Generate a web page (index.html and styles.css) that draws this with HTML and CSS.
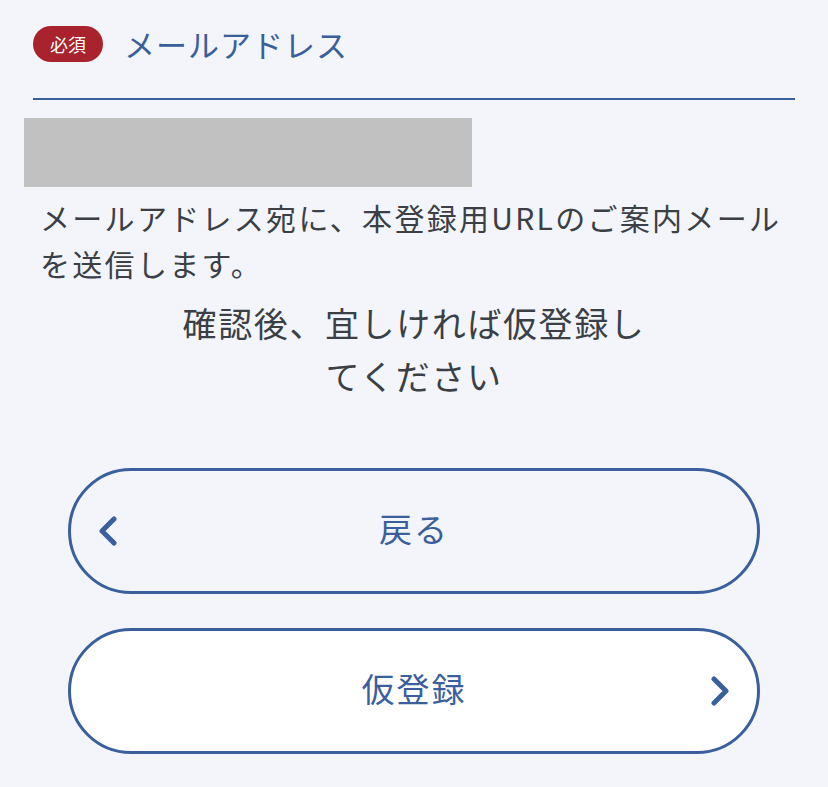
FILE: index.html
```html
<!DOCTYPE html>
<html lang="ja">
<head>
    <meta charset="UTF-8">
    <meta name="viewport" content="width=device-width, initial-scale=1.0">
    <title>仮登録確認</title>
    <link rel="stylesheet" href="styles.css">
</head>
<body>

    <!-- メールアドレス確認 -->
    <div class="form">
        <div class="field-head">
            <span class="badge">必須</span>
            <span class="label">メールアドレス</span>
        </div>
        <div class="rule"></div>
        <div class="email-mask"></div>
        <p class="note">メールアドレス宛に、本登録用URLのご案内メールを送信します。</p>
        <p class="confirm">確認後、宜しければ仮登録してください</p>

        <div class="actions">
            <button class="btn btn-back" type="button">
                <svg class="chev" viewBox="0 0 20 30" width="20" height="30">
                    <path d="M16 3 L4 15 L16 27" />
                </svg>
                <span class="btn-text">戻る</span>
                <span></span>
            </button>
            <button class="btn btn-next" type="button">
                <span></span>
                <span class="btn-text">仮登録</span>
                <svg class="chev chev-right" viewBox="0 0 20 30" width="20" height="30">
                    <path d="M4 3 L16 15 L4 27" />
                </svg>
            </button>
        </div>
    </div>

</body>
</html>
```

FILE: styles.css
```css
* {
    margin: 0;
    padding: 0;
    box-sizing: border-box;
}
body {
    background: #f3f5fa;
    font-family: "Noto Sans CJK JP", "Noto Sans", sans-serif;
    color: #3b3f46;
}
.form {
    padding: 26px 33px 0;
}
.field-head {
    display: flex;
    align-items: center;
    gap: 21px;
    height: 36px;
}
.badge {
    width: 70px;
    height: 36px;
    border-radius: 18px;
    background: #a8232e;
    color: #fff;
    font-size: 18px;
    line-height: 36px;
    text-align: center;
}
.label {
    color: #3a5f9c;
    font-size: 31px;
    letter-spacing: 1px;
    line-height: 36px;
}
.rule {
    margin-top: 36px;
    border-top: 2px solid #3a5f9c;
}
.email-mask {
    margin: 18px 0 0 -9px;
    width: 448px;
    height: 69px;
    background: #c1c1c1;
}
.note {
    margin-top: 7px;
    padding-left: 7px;
    font-size: 30px;
    line-height: 46px;
    letter-spacing: 2.3px;
}
.confirm {
    width: 480px;
    margin: 10px auto 0;
    text-align: center;
    font-size: 34px;
    letter-spacing: 1.6px;
    line-height: 53px;
}
.actions {
    margin: 66px 35px 0;
    display: flex;
    flex-direction: column;
    gap: 34px;
}
.btn {
    display: grid;
    grid-template-columns: 60px 1fr 60px;
    align-items: center;
    height: 126px;
    padding: 0 27px;
    border: 3px solid #3a5f9c;
    border-radius: 63px;
    background: #f3f5fa;
    color: #3a5f9c;
    font-family: inherit;
    cursor: pointer;
}
.btn-next {
    background: #fff;
}
.btn-text {
    font-size: 33px;
    letter-spacing: 2px;
    text-align: center;
    padding-bottom: 6px;
}
.chev {
    fill: none;
    stroke: #3a5f9c;
    stroke-width: 5;
    stroke-linecap: round;
    stroke-linejoin: round;
}
.chev-right {
    justify-self: end;
}
```
